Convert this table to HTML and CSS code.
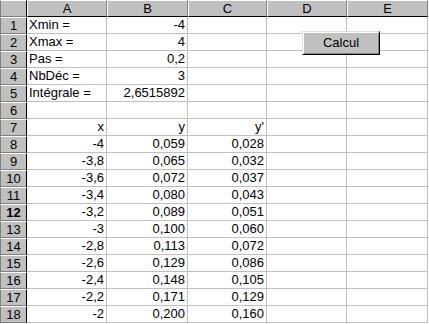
FILE: index.html
```html
<!DOCTYPE html>
<html lang="fr">
<head>
<meta charset="utf-8">
<title>Calcul</title>
<link rel="stylesheet" href="styles.css">
</head>
<body>
<div class="sheet">
  <div class="grid">
    <div class="corner"></div>
    <div class="colh">A</div><div class="colh">B</div><div class="colh">C</div><div class="colh">D</div><div class="colh">E</div>

    <div class="rowh">1</div><div class="c">Xmin =</div><div class="c r">-4</div><div class="c"></div><div class="c"></div><div class="c"></div>
    <div class="rowh">2</div><div class="c">Xmax =</div><div class="c r">4</div><div class="c"></div><div class="c"></div><div class="c"></div>
    <div class="rowh">3</div><div class="c">Pas =</div><div class="c r">0,2</div><div class="c"></div><div class="c"></div><div class="c"></div>
    <div class="rowh">4</div><div class="c">NbDéc =</div><div class="c r">3</div><div class="c"></div><div class="c"></div><div class="c"></div>
    <div class="rowh">5</div><div class="c">Intégrale =</div><div class="c r">2,6515892</div><div class="c"></div><div class="c"></div><div class="c"></div>
    <div class="rowh">6</div><div class="c"></div><div class="c"></div><div class="c"></div><div class="c"></div><div class="c"></div>
    <div class="rowh">7</div><div class="c r">x</div><div class="c r">y</div><div class="c r">y'</div><div class="c"></div><div class="c"></div>
    <div class="rowh">8</div><div class="c r">-4</div><div class="c r">0,059</div><div class="c r">0,028</div><div class="c"></div><div class="c"></div>
    <div class="rowh">9</div><div class="c r">-3,8</div><div class="c r">0,065</div><div class="c r">0,032</div><div class="c"></div><div class="c"></div>
    <div class="rowh">10</div><div class="c r">-3,6</div><div class="c r">0,072</div><div class="c r">0,037</div><div class="c"></div><div class="c"></div>
    <div class="rowh">11</div><div class="c r">-3,4</div><div class="c r">0,080</div><div class="c r">0,043</div><div class="c"></div><div class="c"></div>
    <div class="rowh active">12</div><div class="c r">-3,2</div><div class="c r">0,089</div><div class="c r">0,051</div><div class="c"></div><div class="c"></div>
    <div class="rowh">13</div><div class="c r">-3</div><div class="c r">0,100</div><div class="c r">0,060</div><div class="c"></div><div class="c"></div>
    <div class="rowh">14</div><div class="c r">-2,8</div><div class="c r">0,113</div><div class="c r">0,072</div><div class="c"></div><div class="c"></div>
    <div class="rowh">15</div><div class="c r">-2,6</div><div class="c r">0,129</div><div class="c r">0,086</div><div class="c"></div><div class="c"></div>
    <div class="rowh">16</div><div class="c r">-2,4</div><div class="c r">0,148</div><div class="c r">0,105</div><div class="c"></div><div class="c"></div>
    <div class="rowh">17</div><div class="c r">-2,2</div><div class="c r">0,171</div><div class="c r">0,129</div><div class="c"></div><div class="c"></div>
    <div class="rowh">18</div><div class="c r">-2</div><div class="c r">0,200</div><div class="c r">0,160</div><div class="c"></div><div class="c"></div>
  </div>
  <button class="btn" type="button">Calcul</button>
</div>
</body>
</html>
```

FILE: styles.css
```css
html, body {
  margin: 0;
  padding: 0;
  background: #ffffff;
  overflow: hidden;
}

.sheet {
  position: relative;
  width: 429px;
  height: 324px;
  overflow: hidden;
  font-family: "Liberation Sans", Arial, sans-serif;
  font-size: 13px;
  color: #000000;
}

.grid {
  display: grid;
  grid-template-columns: 27px 80px 81px 79px 80px 81px;
  grid-auto-rows: 17px;
}

.corner,
.colh,
.rowh {
  box-sizing: border-box;
  background: #c0c0c0;
  border-top: 1px solid #ffffff;
  border-left: 1px solid #ffffff;
  border-right: 1px solid #808080;
  border-bottom: 1px solid #808080;
  display: flex;
  align-items: center;
  justify-content: center;
  line-height: 15px;
}

.corner,
.rowh {
  border-left-color: #808080;
  border-right-color: #000000;
}

.colh {
  border-bottom-color: #000000;
}

.rowh.active {
  font-weight: bold;
}

.c {
  box-sizing: border-box;
  border-right: 1px solid #c0c0c0;
  border-bottom: 1px solid #c0c0c0;
  padding: 0 2px;
  line-height: 16px;
  white-space: nowrap;
  overflow: hidden;
}

.r {
  text-align: right;
}

.btn {
  position: absolute;
  left: 302px;
  top: 31px;
  width: 78px;
  height: 24px;
  box-sizing: border-box;
  margin: 0;
  padding: 0;
  background: #c0c0c0;
  border-top: 1px solid #dfdfdf;
  border-left: 1px solid #dfdfdf;
  border-right: 1px solid #000000;
  border-bottom: 1px solid #000000;
  box-shadow: inset 1px 1px 0 #ffffff, inset -1px -1px 0 #808080;
  font-family: "Liberation Sans", Arial, sans-serif;
  font-size: 13px;
  color: #000000;
  line-height: 20px;
}
```
